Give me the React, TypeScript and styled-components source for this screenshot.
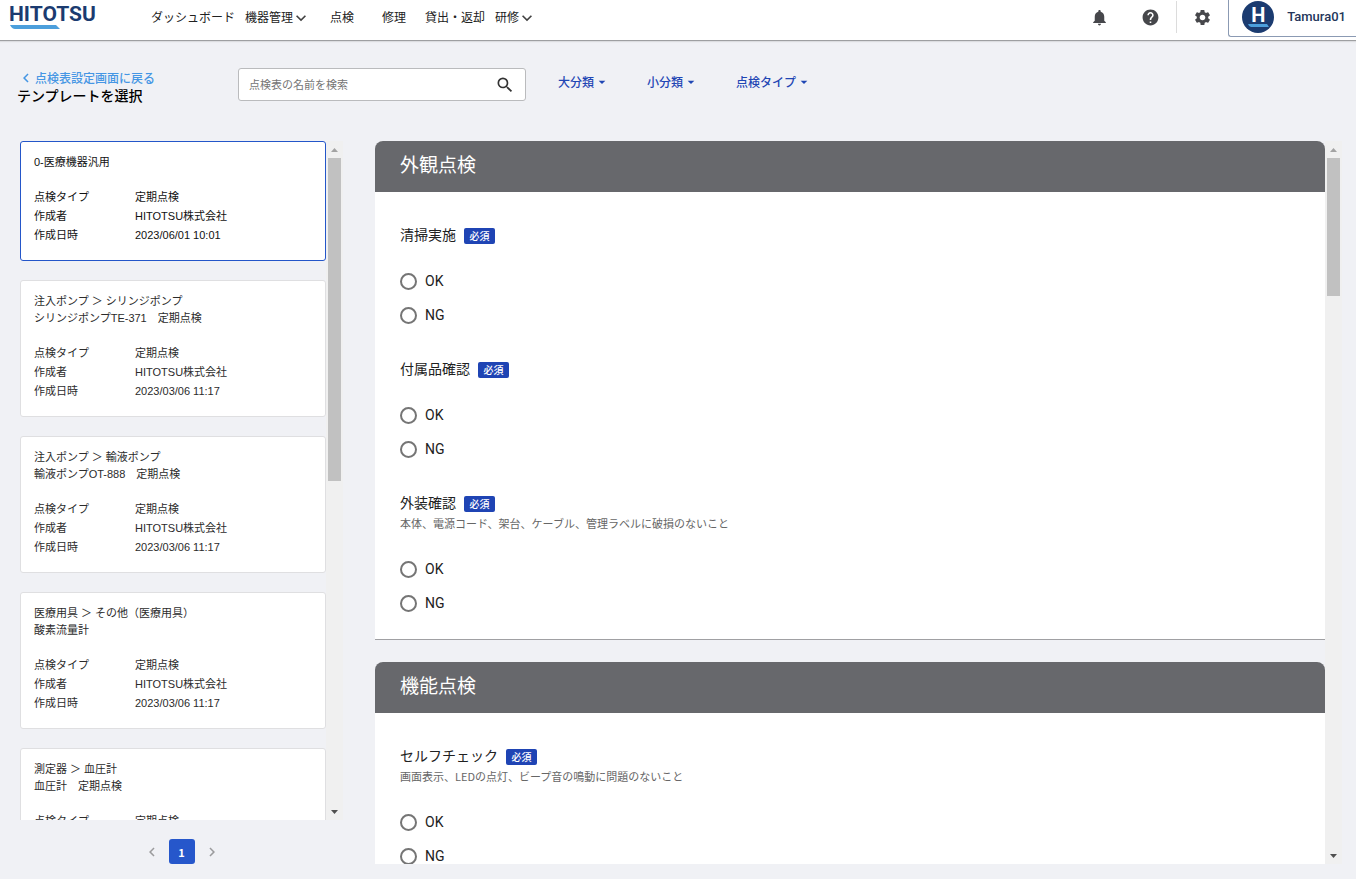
import React from "react";
import styled, { createGlobalStyle } from "styled-components";
import {
  MdArrowDropDown,
  MdChevronLeft,
  MdChevronRight,
  MdExpandMore,
  MdHelp,
  MdNotifications,
  MdSearch,
  MdSettings,
} from "react-icons/md";

const jp = '"Noto Sans CJK JP", sans-serif';

const GlobalStyle = createGlobalStyle`
  *, *::before, *::after { box-sizing: border-box; }
  body {
    margin: 0;
    background: #f0f1f5;
    color: #212121;
    font-family: "Liberation Sans", ${jp};
    font-size: 11px;
  }
  button, input { font: inherit; color: inherit; }
  button { background: none; border: 0; padding: 0; cursor: pointer; }
  a { color: inherit; text-decoration: none; }
  h1, h2, h3, p, dl, dd, dt, ul, fieldset, legend { margin: 0; padding: 0; border: 0; }
  svg { display: block; flex: none; }
`;

const Page = styled.div`
  display: flex;
  flex-direction: column;
  height: 100vh;
`;

const Header = styled.header`
  display: flex;
  align-items: flex-start;
  height: 40px;
  flex: none;
  background: #fff;
  box-shadow: 0 1px 0 #9e9fa1, 0 2px 1px #dcdde0;
`;

const Logo = styled.a`
  display: flex;
  flex-direction: column;
  width: 146px;
  padding: 4px 0 0 9px;
  color: #1b3b70;
  font: 700 21px/20px Roboto, sans-serif;

  svg { margin: 1px 0 0 1px; }
`;

const Nav = styled.nav`
  display: flex;
  flex: 1;
  height: 35px;
`;

const NavItem = styled.a`
  display: flex;
  align-items: center;
  justify-content: center;
  min-width: 52px;
  padding: 0 5px;
  font-size: 12px;
  line-height: 16px;
  white-space: nowrap;

  svg { margin-left: -2px; color: #424242; }
`;

const IconButton = styled.button`
  display: flex;
  align-items: center;
  justify-content: center;
  width: 51px;
  height: 34px;
  color: #46474b;
`;

const Divider = styled.span`
  width: 1px;
  height: 32px;
  margin-top: 1px;
  background: #dcdcdc;
`;

const Account = styled.button`
  display: flex;
  align-items: center;
  gap: 13px;
  height: 37px;
  padding: 0 10px 3px 13px;
  border: 1px solid #8b9ab3;
  border-width: 0 0 1px 1px;
  border-radius: 0 0 0 3px;
  color: #24365a;
  font: 500 13px/20px Roboto, sans-serif;
`;

const Avatar = styled.span`
  display: flex;
  flex-direction: column;
  align-items: center;
  width: 32px;
  height: 32px;
  padding-top: 5px;
  border-radius: 50%;
  background: #1b3b70;
  color: #fff;
  font: 700 20px/18px Roboto, sans-serif;
`;

const Toolbar = styled.div`
  display: flex;
  align-items: flex-start;
  padding: 28px 14px 0 17px;
  margin-bottom: 37px;
`;

const Heading = styled.div`
  width: 221px;
  padding-top: 2px;
`;

const BackLink = styled.a`
  display: flex;
  align-items: center;
  height: 16px;
  color: #4596e4;
  font: 500 12px/16px ${jp};
`;

const Title = styled.h1`
  color: #000;
  font: 500 14px/18px ${jp};
`;

const SearchBox = styled.label`
  display: flex;
  align-items: center;
  width: 288px;
  height: 33px;
  padding: 0 10px;
  border: 1px solid #babbbd;
  border-radius: 3px;
  background: #fff;
  color: #333;
`;

const SearchInput = styled.input`
  flex: 1;
  min-width: 0;
  padding: 0;
  border: 0;
  outline: 0;
  background: none;
  line-height: 16px;

  &::placeholder { color: #757575; opacity: 1; }
`;

const Filters = styled.div`
  display: flex;
  gap: 37px;
  margin-left: 32px;
  padding-top: 6px;
`;

const FilterButton = styled.button`
  display: flex;
  align-items: center;
  color: #1f46b4;
  font: 500 12px/16px ${jp};
  white-space: nowrap;
`;

const Main = styled.main`
  display: flex;
  flex: 1;
  gap: 32px;
  min-height: 0;
  padding: 0 14px 15px 20px;
`;

const Sidebar = styled.aside`
  display: flex;
  flex-direction: column;
  width: 323px;
  min-height: 0;
`;

const ScrollArea = styled.div`
  display: flex;
  flex: 1;
  min-width: 0;
  min-height: 0;
`;

const ScrollContent = styled.div<{ $gap: number }>`
  display: flex;
  flex: 1;
  flex-direction: column;
  gap: ${(p) => p.$gap}px;
  min-width: 0;
  overflow-y: auto;
  scrollbar-width: none;
`;

const Track = styled.div`
  display: flex;
  flex-direction: column;
  width: 17px;
  flex: none;
  background: #f0f0f0;
`;

const TrackEnd = styled.span<{ $color: string }>`
  display: flex;
  align-items: center;
  justify-content: center;
  height: 17px;
  flex: none;
  color: ${(p) => p.$color};
`;

const TrackBody = styled.div`
  flex: 1;
  padding: 0 2px;
`;

const Thumb = styled.div<{ $size: number }>`
  height: ${(p) => p.$size}%;
  background: #c1c1c1;
`;

const Card = styled.article<{ $selected?: boolean }>`
  flex: none;
  padding: 12px 13px 15px;
  border: 1px solid ${(p) => (p.$selected ? "#2456c9" : "#dfdfe1")};
  border-radius: 3px;
  background: #fff;
  color: ${(p) => (p.$selected ? "#111" : "#2b2b2b")};
  cursor: pointer;
`;

const Category = styled.p`
  margin-bottom: 1px;
  line-height: 16px;
`;

const CardName = styled.h2`
  margin-bottom: 18px;
  font-size: 11px;
  font-weight: 400;
  line-height: 16px;
  white-space: pre-wrap;
`;

const Details = styled.dl`
  display: grid;
  grid-template-columns: 101px 1fr;
  line-height: 19px;
`;

const Pagination = styled.nav`
  display: flex;
  align-items: center;
  justify-content: center;
  gap: 8px;
  height: 25px;
  margin-top: 19px;
`;

const PageStep = styled.button`
  color: #9b9b9d;
`;

const PageNumber = styled.button`
  width: 26px;
  height: 25px;
  border-radius: 3px;
  background: #2657cb;
  color: #fff;
  font: 700 11px/16px ${jp};
`;

const Section = styled.section`
  flex: none;
  border-radius: 8px 8px 0 0;
  background: #fff;
  box-shadow: inset 0 -1px 0 #a0a0a3;
`;

const SectionTitle = styled.h2`
  padding: 11px 25px 16px;
  border-radius: 8px 8px 0 0;
  background: #67686c;
  color: #fff;
  font: 400 19px/24px ${jp};
`;

const SectionBody = styled.div`
  display: flex;
  flex-direction: column;
  gap: 25px;
  padding: 31px 25px 20px;
`;

const Question = styled.fieldset`
  min-width: 0;
`;

const QuestionTitle = styled.legend`
  display: flex;
  align-items: center;
  gap: 8px;
  font: 400 14px/22px ${jp};
`;

const Required = styled.span`
  width: 31px;
  margin-top: 4px;
  border-radius: 2px;
  background: #1f44b4;
  color: #fff;
  font: 500 10px/16px ${jp};
  text-align: center;
`;

const Note = styled.p`
  padding-top: 1px;
  color: #666;
  font: 400 11px/19px ${jp};
`;

const Options = styled.div`
  margin-top: 19px;
`;

const Option = styled.label`
  display: flex;
  align-items: center;
  gap: 8px;
  width: max-content;
  height: 34px;
  font: 400 14px/20px Roboto, sans-serif;
`;

const Radio = styled.input`
  appearance: none;
  width: 17px;
  height: 17px;
  margin: 0;
  border: 2px solid #757575;
  border-radius: 50%;
  background: #fff;

  &:checked { border-color: #1f44b4; box-shadow: inset 0 0 0 3px #fff; background: #1f44b4; }
`;

type Template = { category?: string; name: string; date: string };

const templates: Template[] = [
  { name: "0-医療機器汎用", date: "2023/06/01 10:01" },
  { category: "注入ポンプ ＞ シリンジポンプ", name: "シリンジポンプTE-371　定期点検", date: "2023/03/06 11:17" },
  { category: "注入ポンプ ＞ 輸液ポンプ", name: "輸液ポンプOT-888　定期点検", date: "2023/03/06 11:17" },
  { category: "医療用具 ＞ その他（医療用具）", name: "酸素流量計", date: "2023/03/06 11:17" },
  { category: "測定器 ＞ 血圧計", name: "血圧計　定期点検", date: "2023/03/06 11:17" },
];

const sections = [
  {
    title: "外観点検",
    questions: [
      { title: "清掃実施" },
      { title: "付属品確認" },
      { title: "外装確認", note: "本体、電源コード、架台、ケーブル、管理ラベルに破損のないこと" },
    ],
  },
  {
    title: "機能点検",
    questions: [
      { title: "セルフチェック", note: "画面表示、LEDの点灯、ビープ音の鳴動に問題のないこと" },
    ],
  },
];

const navItems = [
  { label: "ダッシュボード" },
  { label: "機器管理", menu: true },
  { label: "点検" },
  { label: "修理" },
  { label: "貸出・返却" },
  { label: "研修", menu: true },
];

function Scrollbar({ size }: { size: number }) {
  return (
    <Track aria-hidden="true">
      <TrackEnd $color="#a3a3a3">
        <svg width="7" height="4" viewBox="0 0 7 4"><path d="M0 4 3.5 0 7 4z" fill="currentColor" /></svg>
      </TrackEnd>
      <TrackBody><Thumb $size={size} /></TrackBody>
      <TrackEnd $color="#505050">
        <svg width="7" height="4" viewBox="0 0 7 4"><path d="M0 0h7L3.5 4z" fill="currentColor" /></svg>
      </TrackEnd>
    </Track>
  );
}

export default function App() {
  return (
    <Page>
      <GlobalStyle />
      <Header>
        <Logo href="#">
          HITOTSU
          <svg width="50" height="4" viewBox="0 0 50 4"><path d="M0 0h46l4 4H5Q2 4 0 0z" fill="#4c9fdc" /></svg>
        </Logo>
        <Nav>
          {navItems.map((item) => (
            <NavItem href="#" key={item.label}>
              {item.label}
              {item.menu && <MdExpandMore size={20} />}
            </NavItem>
          ))}
        </Nav>
        <IconButton aria-label="通知"><MdNotifications size={19} /></IconButton>
        <IconButton aria-label="ヘルプ"><MdHelp size={19} /></IconButton>
        <Divider />
        <IconButton aria-label="設定"><MdSettings size={19} /></IconButton>
        <Account>
          <Avatar>
            H
            <svg width="21" height="3" viewBox="0 0 21 3"><path d="M0 0h19l2 3H3Q1 3 0 0z" fill="#4c9fdc" /></svg>
          </Avatar>
          Tamura01
        </Account>
      </Header>

      <Toolbar>
        <Heading>
          <BackLink href="#"><MdChevronLeft size={18} />点検表設定画面に戻る</BackLink>
          <Title>テンプレートを選択</Title>
        </Heading>
        <SearchBox>
          <SearchInput type="text" aria-label="点検表の名前を検索" placeholder="点検表の名前を検索" />
          <MdSearch size={20} />
        </SearchBox>
        <Filters>
          {["大分類", "小分類", "点検タイプ"].map((label) => (
            <FilterButton key={label}>{label}<MdArrowDropDown size={16} /></FilterButton>
          ))}
        </Filters>
      </Toolbar>

      <Main>
        <Sidebar>
          <ScrollArea>
            <ScrollContent $gap={19}>
              {templates.map((t, i) => (
                <Card key={t.name} $selected={i === 0}>
                  {t.category && <Category>{t.category}</Category>}
                  <CardName>{t.name}</CardName>
                  <Details>
                    <dt>点検タイプ</dt><dd>定期点検</dd>
                    <dt>作成者</dt><dd>HITOTSU株式会社</dd>
                    <dt>作成日時</dt><dd>{t.date}</dd>
                  </Details>
                </Card>
              ))}
            </ScrollContent>
            <Scrollbar size={50} />
          </ScrollArea>
          <Pagination aria-label="ページ">
            <PageStep aria-label="前のページ"><MdChevronLeft size={18} /></PageStep>
            <PageNumber aria-current="page">1</PageNumber>
            <PageStep aria-label="次のページ"><MdChevronRight size={18} /></PageStep>
          </Pagination>
        </Sidebar>

        <ScrollArea>
          <ScrollContent $gap={22}>
            {sections.map((s) => (
              <Section key={s.title}>
                <SectionTitle>{s.title}</SectionTitle>
                <SectionBody>
                  {s.questions.map((q) => (
                    <Question key={q.title}>
                      <QuestionTitle>{q.title}<Required>必須</Required></QuestionTitle>
                      {"note" in q && <Note>{q.note}</Note>}
                      <Options>
                        {["OK", "NG"].map((o) => (
                          <Option key={o}><Radio type="radio" name={q.title} value={o} />{o}</Option>
                        ))}
                      </Options>
                    </Question>
                  ))}
                </SectionBody>
              </Section>
            ))}
          </ScrollContent>
          <Scrollbar size={20} />
        </ScrollArea>
      </Main>
    </Page>
  );
}
